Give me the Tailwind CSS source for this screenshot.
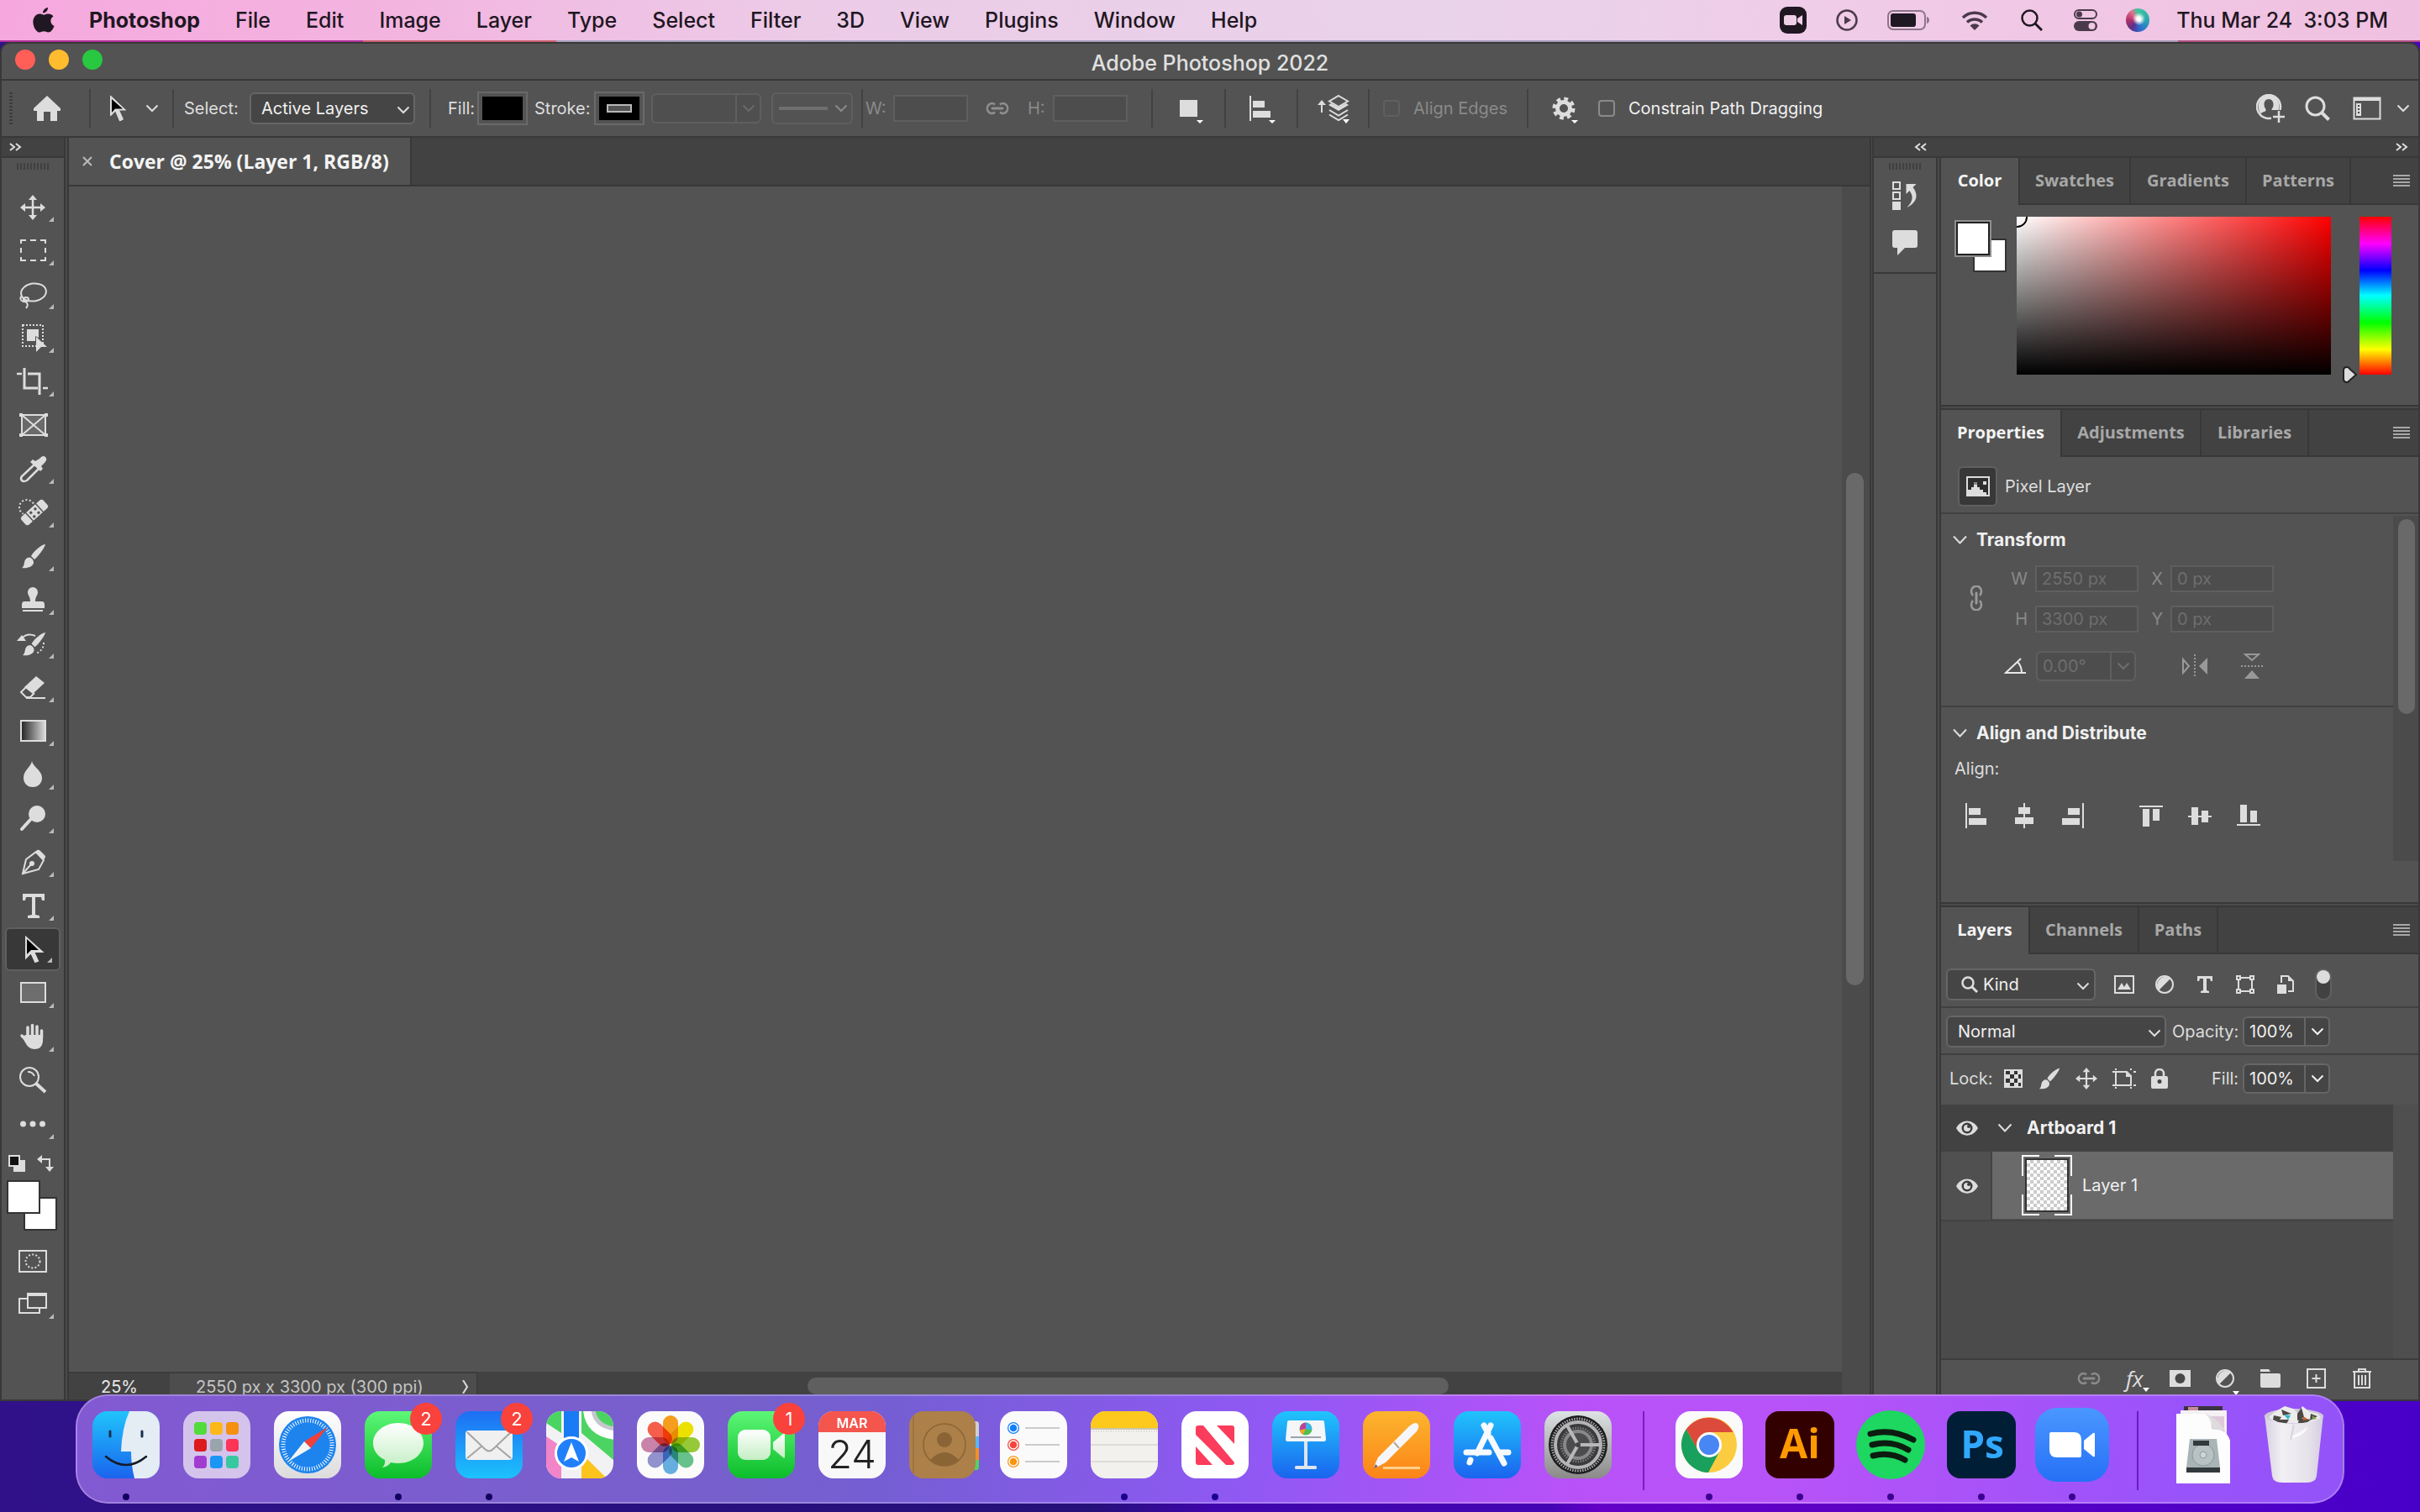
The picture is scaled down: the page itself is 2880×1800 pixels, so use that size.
<!DOCTYPE html>
<html lang="en">
<head>
    <meta charset="UTF-8">
    <meta name="viewport" content="width=device-width, initial-scale=1.0">
    <title>Adobe Photoshop 2022</title>
    <script src="https://cdn.jsdelivr.net/npm/@tailwindcss/browser@4"></script>
</head>
<body class="h-screen flex flex-col overflow-hidden font-['Inter',sans-serif] text-[20px] leading-6 text-[#dddddd] bg-[linear-gradient(to_right,#30118a,#241078_45%,#3f06ab_50%,#4405b4_64%,#6400c8_66%,#5a02c4_80%,#4800c8)]">

    <!-- shared icons -->
    <svg class="hidden">
        <symbol id="chev" viewBox="0 0 16 10"><path d="M1.500 1.500 8 8l6.500-6.500" fill="none" stroke="currentColor" stroke-width="2"/></symbol>
        <symbol id="tri" viewBox="0 0 8 5"><path d="M0 0h8L4 5z" fill="currentColor"/></symbol>
        <symbol id="menu" viewBox="0 0 20 16"><path d="M0 2h20M0 6h20M0 10h20M0 14h20" stroke="currentColor" stroke-width="2"/></symbol>
        <symbol id="link" viewBox="0 0 28 16"><path d="M11 3.500A5.500 6 0 1 0 11 12.500M17 3.500a5.500 6 0 1 1 0 9" fill="none" stroke="currentColor" stroke-width="2.500"/><path d="M8 8h12" stroke="currentColor" stroke-width="3" stroke-linecap="round"/></symbol>
        <symbol id="eye" viewBox="0 0 26 18"><path d="M0 9C6-2.500 20-2.500 26 9 20 20.500 6 20.500 0 9z" fill="#ddd"/><circle cx="13" cy="9" r="6.500" fill="#3c3c3c"/><circle cx="13" cy="9" r="4" fill="#ddd"/><circle cx="15" cy="7" r="2" fill="#3c3c3c"/></symbol>
        <symbol id="brush" viewBox="0 0 30 30"><path d="M29 1C25 1 15 9 12 15l4 4C21 15 28 5 29 1zM10.500 16.500c-4 0-6 3-6.500 6S3 28 1 29c6 1 13-1 14-6 .3-2-1-4-2-5z" fill="currentColor"/></symbol>
        <symbol id="move" viewBox="0 0 30 30"><path d="M15 4v22M4 15h22" stroke="currentColor" stroke-width="2.500"/><path d="M15 0l5 6H10zM15 30l5-6H10zM0 15l6-5v10zM30 15l-6-5v10z" fill="currentColor"/></symbol>
        <symbol id="half" viewBox="0 0 24 24"><circle cx="12" cy="12" r="10" fill="none" stroke="currentColor" stroke-width="2"/><path d="M19 5A10 10 0 0 0 5 19z" fill="currentColor"/></symbol>
    </svg>

    <!-- macOS menu bar -->
    <header class="h-12 shrink-0 flex items-center pl-9 pr-[38px] text-[25px] font-medium text-[#1f1722] bg-[linear-gradient(to_right,#f6a8de,#f3b4e0_16%,#eccbe7_33%,#e9d3ea_60%,#f0cce8_76%,#f0c0e0)]">
        <svg class="w-8 h-8 mr-[38px] shrink-0" viewBox="0 0 32 32"><path d="M21 1c.2 3-2.500 6.500-6 6.500C14.800 4.300 18 1.300 21 1zM27.500 11.500c-5 3-3.500 9.500 1 11.500-1.500 4-4 7.500-7 7.500-2 0-3-1.200-5.300-1.200S12.800 30.500 11 30.500C6.500 30.500 1 20 4.500 13c2-4 6-5.200 8.500-4.200 1.200.4 2.300.9 3.200.9 1 0 2.300-.8 4-1.200 3-.5 6 .8 7.300 3z" fill="#1f1722"/></svg>
        <nav class="flex items-center gap-[42px] whitespace-nowrap">
            <a href="#" class="font-bold">Photoshop</a>
            <a href="#">File</a>
            <a href="#">Edit</a>
            <a href="#">Image</a>
            <a href="#">Layer</a>
            <a href="#">Type</a>
            <a href="#">Select</a>
            <a href="#">Filter</a>
            <a href="#">3D</a>
            <a href="#">View</a>
            <a href="#">Plugins</a>
            <a href="#">Window</a>
            <a href="#">Help</a>
        </nav>
        <div class="ml-auto flex items-center whitespace-nowrap">
            <svg class="w-8 h-8 mr-[35px]" viewBox="0 0 32 32"><rect width="32" height="32" rx="9" fill="#1f1722"/><rect x="5" y="10" width="15" height="12" rx="3" fill="#f0cfe8"/><path d="M21 14l6-4v12l-6-4z" fill="#f0cfe8"/></svg>
            <svg class="w-[26px] h-[26px] mr-[35px]" viewBox="0 0 26 26"><circle cx="13" cy="13" r="11.500" fill="none" stroke="#4b3a4b" stroke-width="2.500"/><path d="M10 8l8 5-8 5z" fill="#4b3a4b"/></svg>
            <svg class="w-[52px] h-6 mr-9" viewBox="0 0 52 24"><rect x="1" y="1" width="44" height="22" rx="6" fill="none" stroke="#8d7489" stroke-width="2"/><rect x="4" y="4" width="30" height="16" rx="3" fill="#1f1722"/><path d="M47 8c4 1 4 7 0 8z" fill="#8d7489"/></svg>
            <svg class="w-8 h-6 mr-[39px]" viewBox="0 0 32 24"><path d="M2 9a20 20 0 0 1 28 0M7 14.500a13 13 0 0 1 18 0" fill="none" stroke="#4b3a4b" stroke-width="3.500"/><path d="M10.500 18.500a8 8 0 0 1 11 0L16 24z" fill="#4b3a4b"/></svg>
            <svg class="w-[26px] h-[26px] mr-[37px]" viewBox="0 0 26 26"><circle cx="10.500" cy="10.500" r="9" fill="none" stroke="#1f1722" stroke-width="2.500"/><path d="M17 17l8 8" stroke="#1f1722" stroke-width="3"/></svg>
            <svg class="w-7 h-[26px] mr-[34px]" viewBox="0 0 28 26"><rect x="1" y="1" width="26" height="10" rx="5" fill="none" stroke="#4b3a4b" stroke-width="2"/><circle cx="6.500" cy="6" r="3.500" fill="#4b3a4b"/><rect y="14" width="28" height="12" rx="6" fill="#4b3a4b"/><circle cx="21.500" cy="20" r="4" fill="#f0c8e4"/></svg>
            <span class="w-7 h-7 mr-8 rounded-full bg-[radial-gradient(circle_at_55%_45%,#ffffff,#ffffff_10%,transparent_35%),conic-gradient(#3ec8a0,#2aa6b0_25%,#2a6ed0_45%,#5b2f8c_60%,#b0306a_75%,#e0708c_90%,#3ec8a0)]"></span>
            <time class="whitespace-pre">Thu Mar 24  3:03 PM</time>
        </div>
    </header>
    <div class="h-[2px] shrink-0 bg-[linear-gradient(to_right,#b0309a_15%,#c86070_15%,#c86070_23%,#a8a0c0_23%,#a898b8_90%,#b05080_90%)]"></div>

    <main class="flex-1 min-h-0 mb-[132px] flex flex-col rounded-t-xl border-2 border-[#383838] bg-[#535353] overflow-hidden">

        <!-- title bar -->
        <div class="h-[44px] shrink-0 grid grid-cols-[1fr_auto_1fr] items-center border-b-2 border-[#383838] text-[25px] text-[#e0e0e0]">
            <div class="flex gap-4 pl-4 pb-1">
                <button aria-label="Close" class="w-6 h-6 rounded-full bg-[#ff5f57]"></button>
                <button aria-label="Minimize" class="w-6 h-6 rounded-full bg-[#febc2e]"></button>
                <button aria-label="Zoom" class="w-6 h-6 rounded-full bg-[#28c840]"></button>
            </div>
            <h1 class="pt-[3px] font-medium">Adobe Photoshop 2022</h1>
        </div>

        <!-- options bar -->
        <div class="h-[68px] shrink-0 flex items-center border-b-2 border-[#383838] whitespace-nowrap">
            <span class="ml-[9px] w-1 h-[38px] bg-[repeating-linear-gradient(#3c3c3c_0_2px,transparent_2px_4px)]"></span>
            <button aria-label="Home" class="ml-[25px]"><svg class="w-8 h-[30px]" viewBox="0 0 32 30"><path d="M16 0L0 15v3h4v12h8V19h8v11h8V18h4v-3z" fill="#ddd"/></svg></button>
            <span class="ml-[34px] w-[2px] h-[46px] bg-[#424242]"></span>
            <button aria-label="Path Selection Tool" class="ml-[22px]"><svg class="w-[22px] h-[34px]" viewBox="0 0 22 34"><path d="M1.500 2v24l6-6 5 12 4-2-5-11h8z" fill="#ddd" stroke="#ddd"/><path d="M3 6v16l4-4.500h9z" fill="#000"/></svg></button>
            <button aria-label="Tool presets" class="ml-[21px]"><svg class="w-4 h-[10px]"><use href="#chev"/></svg></button>
            <span class="ml-4 w-[2px] h-[46px] bg-[#424242]"></span>
            <label for="select-layers" class="ml-3 w-[66px]">Select:</label>
            <div class="relative ml-3 w-[197px]">
                <select id="select-layers" class="appearance-none w-full h-[38px] pl-[12px] rounded-md border-2 border-[#666666] bg-[#454545] text-[#f0f0f0]"><option>Active Layers</option></select>
                <svg class="absolute right-[6px] top-4 w-4 h-[10px]"><use href="#chev"/></svg>
            </div>
            <span class="ml-[17px] w-[2px] h-[46px] bg-[#424242]"></span>
            <span class="ml-5 w-8">Fill:</span>
            <button aria-label="Fill" class="ml-[3px] w-[60px] h-10 border-2 border-[#6a6a6a] p-[4px]"><span class="block h-full bg-black"></span></button>
            <span class="ml-2 w-[68px]">Stroke:</span>
            <button aria-label="Stroke" class="ml-[3px] w-[60px] h-10 border-2 border-[#6a6a6a] p-[4px]"><span class="flex h-full bg-black items-center justify-center"><span class="w-[30px] h-[10px] border-2 border-[#b8b8b8] bg-[#535353]"></span></span></button>
            <div class="ml-2 w-[131px] h-9 flex rounded-md border-2 border-[#5f5f5f] bg-[#4f4f4f] text-[#6a6a6a]">
                <input aria-label="Stroke width" disabled class="w-[100px] h-full border-r-2 border-[#5f5f5f]">
                <button aria-label="Stroke width options" class="flex-1 grid place-items-center"><svg class="w-4 h-[10px]"><use href="#chev"/></svg></button>
            </div>
            <button aria-label="Stroke style" class="ml-3 w-[97px] h-[38px] flex items-center justify-between pl-[7px] pr-1 rounded-md border-2 border-[#5f5f5f] text-[#8a8a8a]"><span class="w-[58px] h-1 bg-[#6f6f6f]"></span><svg class="w-4 h-[10px]"><use href="#chev"/></svg></button>
            <span class="ml-[10px] w-[2px] h-[46px] bg-[#424242]"></span>
            <label for="path-w" class="ml-[3px] w-[24px] text-[#8a8a8a]">W:</label>
            <input id="path-w" disabled class="ml-[9px] w-[89px] h-8 border-2 border-[#5f5f5f] bg-[#4d4d4d]">
            <svg class="ml-[21px] w-7 h-4 text-[#8f8f8f]"><use href="#link"/></svg>
            <label for="path-h" class="ml-[22px] w-5 text-[#8a8a8a]">H:</label>
            <input id="path-h" disabled class="ml-[10px] w-[89px] h-8 border-2 border-[#5f5f5f] bg-[#4d4d4d]">
            <span class="ml-[28px] w-[2px] h-[46px] bg-[#424242]"></span>
            <button aria-label="Path operations" class="ml-8 w-8"><svg class="w-8 h-9" viewBox="0 0 32 36"><path d="M0 8h21v20H0z" fill="#ddd"/><path d="M20 32h8l-4 4z" fill="#fff"/></svg></button>
            <span class="ml-[21px] w-[2px] h-[46px] bg-[#424242]"></span>
            <button aria-label="Path alignment" class="ml-[28px] w-8"><svg class="w-8 h-9" viewBox="0 0 32 36"><path d="M0 3h2v30H0zM4 9h14v8H4zM4 21h21v8H4z" fill="#ddd"/><path d="M23 32h8l-4 4z" fill="#fff"/></svg></button>
            <span class="ml-[24px] w-[2px] h-[46px] bg-[#424242]"></span>
            <button aria-label="Path arrangement" class="ml-[23px] w-10"><svg class="w-10 h-9" viewBox="0 0 40 36"><path d="M5 13v10" stroke="#ddd" stroke-width="2"/><path d="M0 14l5-6 5 6z" fill="#ddd"/><path d="M25 3l11 6.500-11 6.500-11-6.500zM14 20l11 6.500L36 20M14 25.500L25 32l11-6.500" fill="none" stroke="#ddd" stroke-width="2"/><path d="M13 14l12 7 12-7-3-2-9 5-9-5z" fill="#ddd"/><path d="M30 31h8l-4 5z" fill="#fff"/></svg></button>
            <span class="ml-[20px] w-[2px] h-[46px] bg-[#424242]"></span>
            <label class="ml-4 flex items-center gap-4 w-[152px] text-[#8a8a8a]"><input type="checkbox" disabled class="appearance-none w-5 h-5 rounded border-2 border-[#606060]">Align Edges</label>
            <span class="ml-[19px] w-[2px] h-[46px] bg-[#424242]"></span>
            <button aria-label="Path options" class="ml-[28px] w-8"><svg class="w-8 h-9" viewBox="0 0 32 36"><circle cx="14" cy="18" r="11" fill="none" stroke="#ddd" stroke-width="5" stroke-dasharray="4.600 4.040"/><circle cx="14" cy="18" r="7.500" fill="none" stroke="#ddd" stroke-width="5"/><path d="M23 32h8l-4 4z" fill="#fff"/></svg></button>
            <label class="ml-[23px] flex items-center gap-4 text-[#f0f0f0]"><input type="checkbox" class="appearance-none w-5 h-5 rounded border-2 border-[#8a8a8a]">Constrain Path Dragging</label>
            <div class="ml-auto mr-[10px] flex items-center">
                <button aria-label="Account"><svg class="w-[34px] h-[34px]" viewBox="0 0 34 34"><circle cx="15" cy="15" r="14" fill="none" stroke="#ddd" stroke-width="2.500"/><path d="M15 6c4 0 5.500 3 5.500 6.500 0 2.500-1 4-2 5.500v2c2 1.500 5 1.500 6 3.500 6-8 3-21-9.500-22.500C3 2 0 15 5.500 23.500c1-2 4-2 6-3.500v-2c-1-1.500-2-3-2-5.500C9.500 9 11 6 15 6z" fill="#ddd"/><path d="M18 19h16v15H18z" fill="#535353"/><path d="M27 20v14M20 27h14" stroke="#ddd" stroke-width="2.500"/></svg></button>
                <button aria-label="Search" class="ml-6"><svg class="w-[30px] h-[30px]" viewBox="0 0 30 30"><circle cx="12.500" cy="12.500" r="10.500" fill="none" stroke="#ddd" stroke-width="3"/><path d="M20 20l8.500 8.500" stroke="#ddd" stroke-width="4"/></svg></button>
                <button aria-label="Workspace" class="ml-[27px]"><svg class="w-[34px] h-7" viewBox="0 0 34 28"><path d="M1.500 1.500h31v25h-31z" fill="none" stroke="#ddd" stroke-width="2"/><path d="M1 1h32v4H1zM4 8h6v15H4z" fill="#ddd"/><path d="M6 10h2v2H6zM6 14h2v2H6zM6 18h2v2H6z" fill="#444"/></svg></button>
                <button aria-label="Workspace options" class="ml-[18px]"><svg class="w-4 h-[10px]"><use href="#chev"/></svg></button>
            </div>
        </div>

        <div class="flex-1 min-h-0 flex">

            <!-- toolbar -->
            <aside class="w-[74px] shrink-0 flex flex-col">
                <button aria-label="Expand toolbar" class="h-[24px] shrink-0 pl-[9px] bg-[#424242] border-b-2 border-[#383838]"><svg class="w-4 h-3" viewBox="0 0 16 12"><path d="M1 2l5 4-5 4M8 2l5 4-5 4" fill="none" stroke="#ddd" stroke-width="2"/></svg></button>
                <span class="mt-[6px] mx-auto w-[38px] h-2 shrink-0 bg-[repeating-linear-gradient(to_right,#404040_0_2px,transparent_2px_4px)]"></span>
                <div id="tools" class="mt-[18px] flex flex-col items-center"></div>
                <div class="mt-[11px] flex justify-between pl-2 pr-[12px]">
                    <button aria-label="Default colors"><svg class="w-5 h-5" viewBox="0 0 20 20"><path d="M6 6h14v14H6z" fill="#ddd"/><path d="M1 1h12v12H1z" fill="#111" stroke="#ddd" stroke-width="2"/></svg></button>
                    <button aria-label="Swap colors"><svg class="w-5 h-5" viewBox="0 0 20 20"><path d="M4 5h11v11" fill="none" stroke="#ddd" stroke-width="2"/><path d="M0 5l6-5v10zM15 20l-5-6h10z" fill="#ddd"/></svg></button>
                </div>
                <div class="relative mt-[10px] ml-[6px] w-[60px] h-[60px]">
                    <button aria-label="Background color" class="absolute right-0 bottom-0 w-10 h-10 border-2 border-[#333333] bg-white"></button>
                    <button aria-label="Foreground color" class="absolute left-0 top-0 w-10 h-10 border-2 border-[#333333] bg-white"></button>
                </div>
                <button aria-label="Quick mask" class="mt-[23px] mx-auto"><svg class="w-[34px] h-7" viewBox="0 0 34 28"><path d="M1 1h32v25H1z" fill="none" stroke="#ddd" stroke-width="2"/><ellipse cx="17" cy="13.500" rx="8.500" ry="8" fill="none" stroke="#ddd" stroke-width="2" stroke-dasharray="2 2.200"/></svg></button>
                <button aria-label="Screen mode" class="mt-[22px] w-16 pl-5"><svg class="w-[44px] h-8" viewBox="0 0 44 32"><path d="M1 8h24v17H1z" fill="#535353" stroke="#ddd" stroke-width="2"/><path d="M11 2h22v17H11z" fill="#535353" stroke="#ddd" stroke-width="2"/><path d="M10 1h24v4H10z" fill="#ddd"/><path d="M42 26v6h-6z" fill="#bbb"/></svg></button>
            </aside>
            <span class="w-[6px] shrink-0 border-x-2 border-[#383838] bg-[#4a4a4a]"></span>

            <!-- document -->
            <section class="flex-1 min-w-0 flex flex-col">
                <div class="h-[58px] shrink-0 flex bg-[#424242] border-b-2 border-[#383838]">
                    <div class="flex items-center gap-5 px-4 w-[408px] bg-[#535353] border-r-2 border-[#383838] font-['Open_Sans',sans-serif] font-bold text-[23px] text-[#f4f4f4] whitespace-nowrap">
                        <button aria-label="Close document"><svg class="w-3 h-3" viewBox="0 0 12 12"><path d="M1 1l10 10M11 1L1 11" stroke="#bbb" stroke-width="2"/></svg></button>
                        <span>Cover @ 25% (Layer 1, RGB/8)</span>
                    </div>
                </div>
                <div class="flex-1 min-h-0 flex">
                    <div class="flex-1"></div>
                    <div class="w-[33px] bg-[#4b4b4b] pl-[5px] pt-[341px]"><div class="w-[21px] h-[610px] rounded-full bg-[#696969]"></div></div>
                </div>
                <div class="h-[33px] shrink-0 flex bg-[#424242]">
                    <div class="w-[120px] flex items-center justify-center border-t-2 border-[#3c3c3c] text-[#e8e8e8]">25%</div>
                    <div class="w-[367px] flex items-center justify-between pl-[31px] pr-[8px] bg-[#4d4d4d] border-r-2 border-t-2 border-[#3c3c3c] text-[#c4c4c4] whitespace-nowrap">2550 px x 3300 px (300 ppi)<svg class="w-[10px] h-4" viewBox="0 0 10 16"><path d="M2 0l5 8-5 8" fill="none" stroke="#ddd" stroke-width="2"/></svg></div>
                    <div class="flex-1 px-[392px] pt-[7px]"><div class="w-[763px] h-5 rounded-full bg-[#5f5f5f]"></div></div>
                    <div class="w-[33px] bg-[#4b4b4b]"></div>
                </div>
            </section>
            <span class="w-[5px] shrink-0 border-x-2 border-[#383838] bg-[#4a4a4a]"></span>

            <!-- right dock -->
            <div class="w-[648px] shrink-0 flex flex-col">
                <div class="h-[24px] shrink-0 flex items-center justify-between pl-[48px] pr-[12px] bg-[#424242] border-b-2 border-[#383838]">
                    <button aria-label="Expand panels"><svg class="w-4 h-3" viewBox="0 0 16 12"><path d="M7 2L2 6l5 4M14 2L9 6l5 4" fill="none" stroke="#ddd" stroke-width="2"/></svg></button>
                    <button aria-label="Collapse panels"><svg class="w-4 h-3" viewBox="0 0 16 12"><path d="M2 2l5 4-5 4M9 2l5 4-5 4" fill="none" stroke="#ddd" stroke-width="2"/></svg></button>
                </div>
                <div class="flex-1 min-h-0 flex">
                    <div class="w-[74px] shrink-0">
                        <div class="h-[138px] flex flex-col items-center border-b-2 border-[#383838]">
                            <span class="mt-[6px] w-[38px] h-2 bg-[repeating-linear-gradient(to_right,#404040_0_2px,transparent_2px_4px)]"></span>
                            <button aria-label="History" class="mt-[14px]"><svg class="w-[30px] h-[34px]" viewBox="0 0 30 34"><path d="M1 1h8v8H1zM1 13h8v8H1z" fill="none" stroke="#ddd" stroke-width="2"/><path d="M0 24h10v10H0zM16.500 3h12l-4 4c7 9 5 18-7 24 7-7 8-13 3-20l-4 4z" fill="#ddd"/></svg></button>
                            <button aria-label="Comments" class="mt-6"><svg class="w-[30px] h-[30px]" viewBox="0 0 30 30"><path d="M3 0h24q3 0 3 3v15q0 3-3 3H15l-9 9v-9H3q-3 0-3-3V3q0-3 3-3z" fill="#ddd"/></svg></button>
                        </div>
                    </div>
                    <span class="w-[6px] shrink-0 border-x-2 border-[#383838] bg-[#4a4a4a]"></span>

                    <div class="flex-1 min-w-0 flex flex-col">
                        <!-- color -->
                        <section class="h-[296px] shrink-0 border-b-2 border-[#383838]">
                            <div class="h-[56px] flex font-['Open_Sans',sans-serif] font-bold text-[#a8a8a8] bg-[#424242]">
                                <button class="w-[94px] pb-[2px] border-r-2 border-[#383838] bg-[#535353] text-[#f4f4f4]">Color</button>
                                <button class="w-[132px] border-r-2 border-b-2 border-[#383838]">Swatches</button>
                                <button class="w-[138px] border-r-2 border-b-2 border-[#383838]">Gradients</button>
                                <button class="w-[124px] border-r-2 border-b-2 border-[#383838]">Patterns</button>
                                <div class="flex-1 flex items-center justify-end pr-[10px] border-b-2 border-[#383838]"><button aria-label="Panel menu"><svg class="w-5 h-4"><use href="#menu"/></svg></button></div>
                            </div>
                            <div class="flex pt-[14px] pl-4">
                                <div class="relative mt-1 w-[62px] h-[62px]">
                                    <button aria-label="Set background color" class="absolute right-0 bottom-0 w-10 h-10 border-2 border-[#333333] bg-white"></button>
                                    <button aria-label="Set foreground color" class="absolute left-0 top-0 w-11 h-11 border-2 border-[#8f8f8f] bg-white"><span class="block w-full h-full border-2 border-[#222222]"></span></button>
                                </div>
                                <div class="relative overflow-hidden ml-3 w-[374px] h-[188px] bg-[linear-gradient(to_top,#000000,transparent),linear-gradient(to_right,#ffffff,#ff0000)]">
                                    <span class="absolute -left-3 -top-3 w-[25px] h-[25px] rounded-full border-2 border-black"></span>
                                </div>
                                <svg class="mt-[178px] ml-[14px] w-[17px] h-5" viewBox="0 0 17 20"><path d="M1 5q0-4 4-4 2 0 3 2l8 7-8 7q-1 2-3 2-4 0-4-4z" fill="#ddd" stroke="#222" stroke-width="2"/></svg>
                                <div class="ml-[3px] w-[38px] h-[188px] bg-[linear-gradient(#ff0000,#ff00ff_17%,#0000ff_34%,#00ffff_50%,#00ff00_67%,#ffff00_84%,#ff0000)]"></div>
                            </div>
                        </section>
                        <div class="h-1 shrink-0 bg-[#4a4a4a] border-b-2 border-[#383838]"></div>

                        <!-- properties -->
                        <section class="h-[588px] shrink-0 flex flex-col border-b-2 border-[#383838]">
                            <div class="h-[56px] shrink-0 flex font-['Open_Sans',sans-serif] font-bold text-[#a8a8a8] bg-[#424242]">
                                <button class="w-[144px] pb-[2px] border-r-2 border-[#383838] bg-[#535353] text-[#f4f4f4]">Properties</button>
                                <button class="w-[166px] border-r-2 border-b-2 border-[#383838]">Adjustments</button>
                                <button class="w-[128px] border-r-2 border-b-2 border-[#383838]">Libraries</button>
                                <div class="flex-1 flex items-center justify-end pr-[10px] border-b-2 border-[#383838]"><button aria-label="Panel menu"><svg class="w-5 h-4"><use href="#menu"/></svg></button></div>
                            </div>
                            <div class="h-[68px] shrink-0 flex items-center gap-[9px] pl-5 pt-1 border-b-2 border-[#404040]">
                                <span class="w-[47px] h-12 grid place-items-center rounded-md border-2 border-[#606060] bg-[#383838]"><svg class="w-7 h-6" viewBox="0 0 28 24"><path d="M1 1h26v22H1z" fill="#2e2e2e" stroke="#ddd" stroke-width="2"/><path d="M2 22v-6h4v-3h3v-4h4v4h3v3h4v3h4v3z" fill="#ddd"/><path d="M20 6h4v4h-4z" fill="#ddd"/><path d="M9 7h4v3H9z" fill="#888"/></svg></span>
                                Pixel Layer
                            </div>
                            <div class="flex-1 min-h-0 flex">
                                <div class="flex-1">
                                    <div class="h-[230px] pt-[19px] pl-[14px] border-b-2 border-[#404040]">
                                        <h2 class="flex items-center gap-[11px] font-bold text-[21px] leading-6 text-[#f0f0f0]"><svg class="w-[17px] h-3" viewBox="0 0 17 12"><path d="M1 1.500l7.500 8 7.500-8" fill="none" stroke="#ddd" stroke-width="2"/></svg>Transform</h2>
                                        <div class="flex mt-[18px]">
                                            <button aria-label="Link width and height" class="ml-5 w-4 h-[30px] mt-6 text-[#9a9a9a]"><svg class="w-4 h-[30px]" viewBox="0 0 16 30"><path d="M4 12A6 6.500 0 1 1 12 12M4 18a6 6.500 0 1 0 8 0" fill="none" stroke="currentColor" stroke-width="2.500"/><path d="M8 9v12" stroke="currentColor" stroke-width="3" stroke-linecap="round"/></svg></button>
                                            <div class="ml-[33px] grid grid-cols-[20px_123px_20px_123px] gap-x-[9px] gap-y-4 items-center text-[#8a8a8a]">
                                                <label for="w" class="text-right">W</label>
                                                <input id="w" disabled value="2550 px" class="w-[123px] h-8 pl-[6px] border-2 border-[#5f5f5f] bg-[#4d4d4d] text-[#6e6e6e]">
                                                <label for="x" class="text-right">X</label>
                                                <input id="x" disabled value="0 px" class="w-[123px] h-8 pl-[6px] border-2 border-[#5f5f5f] bg-[#4d4d4d] text-[#6e6e6e]">
                                                <label for="h" class="text-right">H</label>
                                                <input id="h" disabled value="3300 px" class="w-[123px] h-8 pl-[6px] border-2 border-[#5f5f5f] bg-[#4d4d4d] text-[#6e6e6e]">
                                                <label for="y" class="text-right">Y</label>
                                                <input id="y" disabled value="0 px" class="w-[123px] h-8 pl-[6px] border-2 border-[#5f5f5f] bg-[#4d4d4d] text-[#6e6e6e]">
                                            </div>
                                        </div>
                                        <div class="flex items-center mt-[22px] pl-[61px] text-[#999999]">
                                            <label for="angle"><svg class="w-[26px] h-5" viewBox="0 0 26 20"><path d="M20 1L2 18h24M16 5q5 5 5 13" fill="none" stroke="#e8e8e8" stroke-width="2"/></svg></label>
                                            <div class="ml-3 w-[119px] h-9 flex rounded-md border-2 border-[#5f5f5f] bg-[#4d4d4d] text-[#6e6e6e]">
                                                <input id="angle" disabled value="0.00°" class="w-[88px] pl-[6px] border-r-2 border-[#5f5f5f]">
                                                <button aria-label="Angle options" class="flex-1 grid place-items-center"><svg class="w-4 h-[10px]"><use href="#chev"/></svg></button>
                                            </div>
                                            <button aria-label="Flip horizontal" class="ml-[55px]"><svg class="w-[30px] h-7" viewBox="0 0 30 28"><path d="M1 6v16l7-8z" fill="none" stroke="currentColor" stroke-width="2"/><path d="M30 4v20L20 14z" fill="currentColor"/><path d="M15 0v28" stroke="currentColor" stroke-width="2" stroke-dasharray="2 2"/></svg></button>
                                            <button aria-label="Flip vertical" class="ml-[40px]"><svg class="w-[26px] h-[30px]" viewBox="0 0 26 30"><path d="M5 1h16l-8 7z" fill="none" stroke="currentColor" stroke-width="2"/><path d="M4 30h18l-9-10z" fill="currentColor"/><path d="M0 15h26" stroke="currentColor" stroke-width="2" stroke-dasharray="2 2"/></svg></button>
                                        </div>
                                    </div>
                                    <div class="pt-[19px] pl-[14px]">
                                        <h2 class="flex items-center gap-[11px] font-bold text-[21px] leading-6 text-[#f0f0f0]"><svg class="w-[17px] h-3" viewBox="0 0 17 12"><path d="M1 1.500l7.500 8 7.500-8" fill="none" stroke="#ddd" stroke-width="2"/></svg>Align and Distribute</h2>
                                        <p class="mt-[18px] pl-[2px]">Align:</p>
                                        <div class="flex mt-[29px] pl-[13px] gap-[30px]">
                                            <button aria-label="Align left edges"><svg class="w-7 h-[30px]" viewBox="0 0 28 30"><path d="M2 0h2v30H2zM6 6h14v8H6zM6 18h21v8H6z" fill="#ddd"/></svg></button>
                                            <button aria-label="Align horizontal centers"><svg class="w-7 h-[30px]" viewBox="0 0 28 30"><path d="M13 0h2v30h-2zM7 5h14v8H7zM3 17h22v8H3z" fill="#ddd"/></svg></button>
                                            <button aria-label="Align right edges"><svg class="w-7 h-[30px]" viewBox="0 0 28 30"><path d="M25 0h2v30h-2zM8 6h14v8H8zM1 18h21v8H1z" fill="#ddd"/></svg></button>
                                            <button aria-label="Align top edges" class="ml-[35px]"><svg class="w-7 h-[30px]" viewBox="0 0 28 30"><path d="M0 3h28v2H0zM4 7h8v21H4zM16 7h8v14h-8z" fill="#ddd"/></svg></button>
                                            <button aria-label="Align vertical centers"><svg class="w-7 h-[30px]" viewBox="0 0 28 30"><path d="M0 15h28v2H0zM4 5h8v21H4zM16 9h8v14h-8z" fill="#ddd"/></svg></button>
                                            <button aria-label="Align bottom edges"><svg class="w-7 h-[30px]" viewBox="0 0 28 30"><path d="M0 25h28v2H0zM4 2h8v21H4zM16 9h8v14h-8z" fill="#ddd"/></svg></button>
                                        </div>
                                    </div>
                                </div>
                                <div class="mt-[2px] w-[30px] h-[411px] pt-1 pl-[6px] bg-[#4b4b4b]"><div class="w-5 h-[232px] rounded-full bg-[#696969]"></div></div>
                            </div>
                        </section>
                        <div class="h-1 shrink-0 bg-[#4a4a4a] border-b-2 border-[#383838]"></div>

                        <!-- layers -->
                        <section class="flex-1 min-h-0 flex flex-col">
                            <div class="h-[56px] shrink-0 flex font-['Open_Sans',sans-serif] font-bold text-[#a8a8a8] bg-[#424242]">
                                <button class="w-[106px] pb-[2px] border-r-2 border-[#383838] bg-[#535353] text-[#f4f4f4]">Layers</button>
                                <button class="w-[130px] border-r-2 border-b-2 border-[#383838]">Channels</button>
                                <button class="w-[94px] border-r-2 border-b-2 border-[#383838]">Paths</button>
                                <div class="flex-1 flex items-center justify-end pr-[10px] border-b-2 border-[#383838]"><button aria-label="Panel menu"><svg class="w-5 h-4"><use href="#menu"/></svg></button></div>
                            </div>
                            <div class="h-16 shrink-0 flex items-center pt-[10px] pl-[6px] border-b-2 border-[#404040]">
                                <div class="relative w-[178px]">
                                    <svg class="absolute left-[18px] top-[9px] w-5 h-5" viewBox="0 0 20 20"><circle cx="8" cy="8" r="6.500" fill="none" stroke="#ddd" stroke-width="2.500"/><path d="M13 13l6 6" stroke="#ddd" stroke-width="3"/></svg>
                                    <select aria-label="Filter kind" class="appearance-none w-full h-[38px] pl-[42px] rounded-md border-2 border-[#666666] bg-[#454545] text-[#f0f0f0]"><option>Kind</option></select>
                                    <svg class="absolute right-[7px] top-4 w-4 h-[10px]"><use href="#chev"/></svg>
                                </div>
                                <div class="flex items-center gap-[24px] ml-[22px]">
                                    <button aria-label="Filter pixel layers"><svg class="w-6 h-6" viewBox="0 0 24 24"><path d="M1 2h22v20H1z" fill="none" stroke="#ddd" stroke-width="2"/><path d="M4 18l5-8 3 5 3-5 5 8z" fill="#ddd"/></svg></button>
                                    <button aria-label="Filter adjustment layers"><svg class="w-6 h-6"><use href="#half"/></svg></button>
                                    <button aria-label="Filter type layers"><svg class="w-6 h-6" viewBox="0 0 24 24"><path d="M3 2h18v6h-2l-1-3h-4v14l3 1v2H7v-2l3-1V5H6L5 8H3z" fill="#ddd"/></svg></button>
                                    <button aria-label="Filter shape layers"><svg class="w-6 h-6" viewBox="0 0 24 24"><path d="M4 4h16v16H4z" fill="none" stroke="#ddd" stroke-width="2"/><path d="M2 2h4v4H2zM18 2h4v4h-4zM2 18h4v4H2zM18 18h4v4h-4z" fill="#535353" stroke="#ddd" stroke-width="2"/></svg></button>
                                    <button aria-label="Filter smart objects"><svg class="w-6 h-6" viewBox="0 0 24 24"><path d="M7 10V2h8l6 6v12h-6" fill="none" stroke="#ddd" stroke-width="2"/><path d="M15 2v6h6z" fill="#ddd"/><path d="M2 12h11v11H2z" fill="#ddd"/></svg></button>
                                </div>
                                <button aria-label="Layer filtering" class="ml-[23px] w-5 h-[38px] flex items-start rounded-full border-2 border-[#606060] bg-[#424242]"><span class="w-4 h-4 rounded-full bg-[#dddddd]"></span></button>
                            </div>
                            <div class="h-14 shrink-0 flex items-center pl-[6px] pt-[2px] border-b-2 border-[#404040]">
                                <div class="relative w-[262px]">
                                    <select aria-label="Blend mode" class="appearance-none w-full h-[38px] pl-[12px] rounded-md border-2 border-[#666666] bg-[#454545] text-[#f0f0f0]"><option>Normal</option></select>
                                    <svg class="absolute right-[6px] top-4 w-4 h-[10px]"><use href="#chev"/></svg>
                                </div>
                                <label for="opacity" class="ml-[7px] w-[81px]">Opacity:</label>
                                <div class="ml-[3px] w-[104px] h-9 flex rounded-md border-2 border-[#666666] bg-[#454545] text-[#f0f0f0]">
                                    <input id="opacity" value="100%" class="w-[73px] pl-[6px] border-r-2 border-[#666666]">
                                    <button aria-label="Opacity slider" class="flex-1 grid place-items-center"><svg class="w-4 h-[10px]"><use href="#chev"/></svg></button>
                                </div>
                            </div>
                            <div class="h-[59px] shrink-0 flex items-center pb-[3px] pl-[10px]">
                                <span class="w-[52px]">Lock:</span>
                                <div class="flex items-center gap-[18px] ml-3">
                                    <button aria-label="Lock transparent pixels"><svg class="w-6 h-6" viewBox="0 0 24 24"><path d="M2 2h20v20H2z" fill="#333" stroke="#ddd" stroke-width="2"/><path d="M8 2h5v5H8zM17 2h5v5h-5zM3 7h5v5H3zM13 7h5v5h-5zM8 12h5v5H8zM17 12h5v5h-5zM3 17h5v5H3zM13 17h5v5h-5z" fill="#ddd"/></svg></button>
                                    <button aria-label="Lock image pixels"><svg class="w-[26px] h-[26px]"><use href="#brush"/></svg></button>
                                    <button aria-label="Lock position"><svg class="w-[26px] h-[26px]"><use href="#move"/></svg></button>
                                    <button aria-label="Lock artboard nesting" class="w-7"><svg class="w-7 h-6" viewBox="0 0 28 24"><path d="M4 4h13l5 5v11H4z" fill="none" stroke="#ddd" stroke-width="2"/><path d="M16 4v6h6z" fill="#ddd"/><path d="M0 4h3M4 0v2M22 0v2M25 4h3M0 20h3M4 22v2M22 22v2M25 20h3" stroke="#ddd" stroke-width="2"/></svg></button>
                                    <button aria-label="Lock all"><svg class="w-5 h-6" viewBox="0 0 20 24"><path d="M5 10V6a5 5 0 0 1 10 0v4" fill="none" stroke="#ddd" stroke-width="2.500"/><rect y="9" width="20" height="15" rx="2" fill="#ddd"/><circle cx="10" cy="15.500" r="2.500" fill="#444"/></svg></button>
                                </div>
                                <label for="fill-opacity" class="ml-auto w-[34px]">Fill:</label>
                                <div class="ml-[3px] mr-[105px] w-[104px] h-9 flex rounded-md border-2 border-[#666666] bg-[#454545] text-[#f0f0f0]">
                                    <input id="fill-opacity" value="100%" class="w-[73px] pl-[6px] border-r-2 border-[#666666]">
                                    <button aria-label="Fill slider" class="flex-1 grid place-items-center"><svg class="w-4 h-[10px]"><use href="#chev"/></svg></button>
                                </div>
                            </div>
                            <div class="flex-1 min-h-0 flex bg-[#4b4b4b]">
                                <ul class="flex-1 text-[#f0f0f0]">
                                    <li class="h-14 flex items-center pl-[18px] bg-[#424242] font-bold text-[21px]">
                                        <button aria-label="Toggle artboard visibility"><svg class="w-[26px] h-[18px]"><use href="#eye"/></svg></button>
                                        <button aria-label="Collapse artboard" class="ml-[23px] mr-[17px]"><svg class="w-[18px] h-3" viewBox="0 0 17 12"><path d="M1 1.500l7.500 8 7.500-8" fill="none" stroke="#ddd" stroke-width="2"/></svg></button>
                                        Artboard 1
                                    </li>
                                    <li class="h-[83px] flex border-b-2 border-[#434343] bg-[#505050]">
                                        <button aria-label="Toggle layer visibility" class="w-[61px] pl-[18px] border-r-2 border-[#434343]"><svg class="w-[26px] h-[18px]"><use href="#eye"/></svg></button>
                                        <div class="flex-1 flex items-center h-20 pl-[35px] gap-3 bg-[#6a6a6a]">
                                            <span class="relative w-[60px] h-[72px] p-1">
                                                <svg class="absolute inset-0 w-[60px] h-[72px]" viewBox="0 0 60 72"><path d="M21 1H1v24M39 1h20v24M21 71H1V47M39 71h20V47" fill="none" stroke="#fff" stroke-width="2"/></svg>
                                                <span class="block w-full h-full border-2 border-[#333333] bg-[repeating-conic-gradient(#cccccc_0%_25%,#ffffff_0%_50%)] bg-size-[8px_8px]"></span>
                                            </span>
                                            Layer 1
                                        </div>
                                    </li>
                                </ul>
                                <div class="w-[30px] bg-[#4f4f4f]"></div>
                            </div>
                            <div class="h-[49px] shrink-0 flex items-center justify-end gap-[26px] pr-[54px] pb-1 border-t-2 border-[#3c3c3c]">
                                <button aria-label="Link layers"><svg class="w-7 h-4 text-[#8a8a8a]"><use href="#link"/></svg></button>
                                <button aria-label="Layer style" class="relative w-7 pl-1 text-left font-['Open_Sans',sans-serif] italic text-[26px]">fx<svg class="absolute -right-[4px] -bottom-1 w-2 h-[5px] text-white"><use href="#tri"/></svg></button>
                                <button aria-label="Add mask"><svg class="w-7 h-6" viewBox="0 0 28 24"><path d="M2 2h25v20H2z" fill="#ddd"/><circle cx="14.500" cy="12" r="6" fill="#484848"/></svg></button>
                                <button aria-label="New adjustment layer" class="relative w-7 grid place-items-center"><svg class="w-6 h-6"><use href="#half"/></svg><svg class="absolute -right-[3px] -bottom-2 w-2 h-[5px] text-white"><use href="#tri"/></svg></button>
                                <button aria-label="New group"><svg class="w-7 h-6" viewBox="0 0 28 24"><path d="M2 1h10l2 3H2zM2 6h22q2 0 2 2v13q0 2-2 2H4q-2 0-2-2z" fill="#ddd"/></svg></button>
                                <button aria-label="New layer"><svg class="w-7 h-6" viewBox="0 0 28 24"><path d="M4 1h21v22H4zM14.500 7v10M9.500 12h10" fill="none" stroke="#ddd" stroke-width="2"/></svg></button>
                                <button aria-label="Delete layer"><svg class="w-7 h-6" viewBox="0 0 28 24"><path d="M4 4h22M11 4V1h8v3M6 5v18h18V5M11 8v12M15 8v12M19 8v12" fill="none" stroke="#ddd" stroke-width="2"/></svg></button>
                            </div>
                        </section>
                    </div>
                </div>
            </div>
        </div>
    </main>

    <!-- dock -->
    <nav aria-label="Dock" class="fixed bottom-[10px] left-1/2 -translate-x-1/2 h-[130px] flex pt-[18px] px-1 rounded-[38px] border-2 border-white/25 bg-[linear-gradient(100deg,#8259d2,#7660cc_30%,#755ed4_36%,#9058f4_52%,#b852f8_66%,#b653f8_76%,#9a53fa_92%,#9353f8)]">
        <svg class="absolute w-0 h-0">
            <defs>
                <linearGradient id="g-green" x2="0" y2="1"><stop stop-color="#5df777"/><stop offset="1" stop-color="#0cbd2a"/></linearGradient>
                <linearGradient id="g-blue" x2="0" y2="1"><stop stop-color="#1e6ef4"/><stop offset="1" stop-color="#1cc2fc"/></linearGradient>
                <linearGradient id="g-blue2" x2="0" y2="1"><stop stop-color="#20c4fc"/><stop offset="1" stop-color="#1a64ee"/></linearGradient>
                <linearGradient id="g-white" x2="0" y2="1"><stop stop-color="#ffffff"/><stop offset="1" stop-color="#dcdcdc"/></linearGradient>
                <linearGradient id="g-bubble" x2="0" y2="1"><stop stop-color="#ffffff"/><stop offset="1" stop-color="#c4eec4"/></linearGradient>
                <linearGradient id="g-orange" x2="0" y2="1"><stop stop-color="#fcb52e"/><stop offset="1" stop-color="#fc8418"/></linearGradient>
                <linearGradient id="g-grey" x2="0" y2="1"><stop stop-color="#dde2e4"/><stop offset="1" stop-color="#8a8a88"/></linearGradient>
                <linearGradient id="g-zoom" x2="0" y2="1"><stop stop-color="#4a97ff"/><stop offset="1" stop-color="#2670f6"/></linearGradient>
                <linearGradient id="g-bin"><stop stop-color="#d8d0e0"/><stop offset=".3" stop-color="#f2f0f4"/><stop offset=".75" stop-color="#e6e2ea"/><stop offset="1" stop-color="#d4cce0"/></linearGradient>
                <clipPath id="tile"><rect width="80" height="80" rx="18"/></clipPath>
            </defs>
        </svg>

        <button aria-label="Finder" class="relative w-[108px] h-20 flex items-center justify-center"><svg class="w-20 h-20" viewBox="0 0 80 80"><g clip-path="url(#tile)"><path d="M0 0h80v80H0z" fill="url(#g-blue2)"/><path d="M44 0h36v80H50q-4-16-4-32H34Q35 20 44 0z" fill="#e4ecf4"/></g><path d="M21 24v6M59 24v6" stroke="#16304a" stroke-width="3" stroke-linecap="round"/><path d="M16 54q24 20 48 0" fill="none" stroke="#141c28" stroke-width="2.500" stroke-linecap="round"/></svg><span class="absolute left-1/2 -translate-x-1/2 -bottom-[26px] w-2 h-2 rounded-full bg-[#120060]"></span></button>
        <button aria-label="Launchpad" class="relative w-[108px] h-20 flex items-center justify-center"><svg class="w-20 h-20" viewBox="0 0 80 80"><rect width="80" height="80" rx="18" fill="#d4c4ec"/><g><rect x="13" y="13" width="15" height="15" rx="4" fill="#52dc3c"/><rect x="32" y="13" width="15" height="15" rx="4" fill="#fcb818"/><rect x="51" y="13" width="15" height="15" rx="4" fill="#f59010"/><rect x="13" y="33" width="15" height="15" rx="4" fill="#dc1c1c"/><rect x="32" y="33" width="15" height="15" rx="4" fill="#9aa4ac"/><rect x="51" y="33" width="15" height="15" rx="4" fill="#fc3458"/><rect x="13" y="53" width="15" height="15" rx="4" fill="#a23cd0"/><rect x="32" y="53" width="15" height="15" rx="4" fill="#1c96f4"/><rect x="51" y="53" width="15" height="15" rx="4" fill="#38c8a0"/></g></svg></button>
        <button aria-label="Safari" class="relative w-[108px] h-20 flex items-center justify-center"><svg class="w-20 h-20" viewBox="0 0 80 80"><rect width="80" height="80" rx="18" fill="url(#g-white)"/><circle cx="40" cy="40" r="34" fill="#1d84ee"/><circle cx="40" cy="40" r="29" fill="none" stroke="#fff" stroke-width="5" stroke-dasharray="1 2.036"/><path d="M64 19L36 36l8 8z" fill="#f0403a"/><path d="M17 60l19-24 8 8z" fill="#f4f4f4"/></svg></button>
        <button aria-label="Messages" class="relative w-[108px] h-20 flex items-center justify-center"><svg class="w-20 h-20" viewBox="0 0 80 80"><rect width="80" height="80" rx="18" fill="url(#g-green)"/><path d="M40 14c17 0 30 11 30 24S57 62 40 62q-5 0-9-1-3 5-10 6 4-4 3-9C15 54 10 46 10 38c0-13 13-24 30-24z" fill="url(#g-bubble)"/></svg><span class="absolute right-[2px] -top-[10px] w-[38px] h-[38px] rounded-full bg-[#fa423c] text-white text-[22px] leading-[38px]">2</span><span class="absolute left-1/2 -translate-x-1/2 -bottom-[26px] w-2 h-2 rounded-full bg-[#120060]"></span></button>
        <button aria-label="Mail" class="relative w-[108px] h-20 flex items-center justify-center"><svg class="w-20 h-20" viewBox="0 0 80 80"><rect width="80" height="80" rx="18" fill="url(#g-blue)"/><rect x="12" y="23" width="56" height="35" rx="4" fill="#f0f0f0"/><path d="M14 25l21 20q5 5 10 0l21-20M14 56l18-15M66 56L48 41" fill="none" stroke="#a4a4a4" stroke-width="2"/></svg><span class="absolute right-[2px] -top-[10px] w-[38px] h-[38px] rounded-full bg-[#fa423c] text-white text-[22px] leading-[38px]">2</span><span class="absolute left-1/2 -translate-x-1/2 -bottom-[26px] w-2 h-2 rounded-full bg-[#120060]"></span></button>
        <button aria-label="Maps" class="relative w-[108px] h-20 flex items-center justify-center"><svg class="w-20 h-20" viewBox="0 0 80 80"><g clip-path="url(#tile)"><path d="M0 0h80v80H0z" fill="#f2f2f4"/><path d="M0 0h18v26L0 14zM42 0h38v58L42 26z" fill="#4cd462"/><path d="M50 -2q2 26 32 30" fill="none" stroke="#fff" stroke-width="12"/><path d="M56 -2q2 20 26 23" fill="none" stroke="#c4c8cc" stroke-width="5"/><path d="M0 30l18 12v38H0z" fill="#f284c8"/><path d="M42 50l30 30H42z" fill="#fcc41c"/><path d="M21 0h18v48H21z" fill="#1a7cf4"/></g><circle cx="30" cy="50" r="18.500" fill="#2080fa" stroke="#fff" stroke-width="3"/><path d="M30 37l9 23-9-5-9 5z" fill="#fff"/></svg></button>
        <button aria-label="Photos" class="relative w-[108px] h-20 flex items-center justify-center"><svg class="w-20 h-20" viewBox="0 0 80 80"><rect width="80" height="80" rx="18" fill="#fbfbfb"/><g class="[&>rect]:mix-blend-multiply"><rect x="31" y="5" width="18" height="34" rx="9" fill="#f9a01c"/><rect x="31" y="5" width="18" height="34" rx="9" fill="#f0e400" transform="rotate(45 40 40)"/><rect x="31" y="5" width="18" height="34" rx="9" fill="#98cc38" transform="rotate(90 40 40)"/><rect x="31" y="5" width="18" height="34" rx="9" fill="#68c48c" transform="rotate(135 40 40)"/><rect x="31" y="5" width="18" height="34" rx="9" fill="#68b0e4" transform="rotate(180 40 40)"/><rect x="31" y="5" width="18" height="34" rx="9" fill="#9494d0" transform="rotate(225 40 40)"/><rect x="31" y="5" width="18" height="34" rx="9" fill="#cc84ac" transform="rotate(270 40 40)"/><rect x="31" y="5" width="18" height="34" rx="9" fill="#f8604c" transform="rotate(315 40 40)"/></g></svg></button>
        <button aria-label="FaceTime" class="relative w-[108px] h-20 flex items-center justify-center"><svg class="w-20 h-20" viewBox="0 0 80 80"><rect width="80" height="80" rx="18" fill="url(#g-green)"/><rect x="12" y="22" width="39" height="36" rx="9" fill="url(#g-bubble)"/><path d="M54 37l13-11q1 0 1 2v26q0 2-1 2L54 45z" fill="url(#g-bubble)"/></svg><span class="absolute right-[2px] -top-[10px] w-[38px] h-[38px] rounded-full bg-[#fa423c] text-white text-[22px] leading-[38px]">1</span></button>
        <button aria-label="Calendar" class="relative w-[108px] h-20 flex items-center justify-center"><svg class="w-20 h-20" viewBox="0 0 80 80"><rect width="80" height="80" rx="18" fill="#f8f8f8"/><path clip-path="url(#tile)" d="M0 0h80v25H0z" fill="#f4554c"/><text x="40" y="20" text-anchor="middle" font-size="16" font-weight="600" fill="#fff">MAR</text><text x="40" y="68" text-anchor="middle" font-size="47" font-weight="300" fill="#222">24</text></svg></button>
        <button aria-label="Contacts" class="relative w-[108px] h-20 flex items-center justify-center pl-1"><svg class="w-[84px] h-20" viewBox="0 0 84 80"><path d="M76 12h4q3 0 3 4v14h-7z" fill="#d0d0d0"/><path d="M76 30h7v14h-7z" fill="#58b8f0"/><path d="M76 44h7v14h-7z" fill="#f49020"/><path d="M76 58h7v8q0 4-3 4h-4z" fill="#58d060"/><rect width="79" height="80" rx="17" fill="#ac8048"/><circle cx="42" cy="40" r="25" fill="none" stroke="#8a6434" stroke-width="1.500"/><circle cx="42" cy="34" r="9" fill="#8a6434"/><path d="M25 58q17-18 34 0-17 14-34 0z" fill="#8a6434"/><path d="M5 6v68" stroke="#94693a"/></svg></button>
        <button aria-label="Reminders" class="relative w-[108px] h-20 flex items-center justify-center"><svg class="w-20 h-20" viewBox="0 0 80 80"><rect width="80" height="80" rx="18" fill="#fbfafa"/><circle cx="16" cy="20" r="7" fill="#147efc"/><circle cx="16" cy="40" r="7" fill="#f4443c"/><circle cx="16" cy="60" r="7" fill="#fa940c"/><g fill="none" stroke="#fff" stroke-width="1.500"><circle cx="16" cy="20" r="5"/><circle cx="16" cy="40" r="5"/><circle cx="16" cy="60" r="5"/></g><path d="M30 20h41M30 40h41M30 60h41" stroke="#bcbcbc" stroke-width="1.500"/></svg></button>
        <button aria-label="Notes" class="relative w-[108px] h-20 flex items-center justify-center"><svg class="w-20 h-20" viewBox="0 0 80 80"><rect width="80" height="80" rx="18" fill="#f2f1ee"/><path clip-path="url(#tile)" d="M0 0h80v20H0z" fill="#fdc91c"/><path d="M0 21h80" stroke="#a89a70"/><path d="M0 24h80" stroke="#b8b8b4" stroke-dasharray="1 2"/><path d="M0 40h80M0 60h80" stroke="#c8c8c4"/></svg><span class="absolute left-1/2 -translate-x-1/2 -bottom-[26px] w-2 h-2 rounded-full bg-[#1c0090]"></span></button>
        <button aria-label="News" class="relative w-[108px] h-20 flex items-center justify-center"><svg class="w-20 h-20" viewBox="0 0 80 80"><rect width="80" height="80" rx="18" fill="#fff"/><path d="M17 20q0-3 3-3h6l37 44q0 3-3 3h-7L17 28zM42 17h18q3 0 3 3v19zM17 42l20 22H20q-3 0-3-3z" fill="#fc3c5c"/></svg><span class="absolute left-1/2 -translate-x-1/2 -bottom-[26px] w-2 h-2 rounded-full bg-[#1c0090]"></span></button>
        <button aria-label="Keynote" class="relative w-[108px] h-20 flex items-center justify-center"><svg class="w-20 h-20" viewBox="0 0 80 80"><rect width="80" height="80" rx="18" fill="url(#g-blue2)"/><path d="M20 11h40q2 0 2 2l2 20q0 3-2 3H18q-2 0-2-3l2-20q0-2 2-2z" fill="#f4f6f8"/><path d="M22 31h36" stroke="#9aa4b0" stroke-width="2"/><circle cx="40" cy="21" r="7.500" fill="#4fbf4f"/><path d="M40 21v-7.500a7.500 7.500 0 0 1 7 9z" fill="#38b4f0"/><path d="M40 21v-7.500a7.500 7.500 0 0 0-7 9z" fill="#c0409a"/><path d="M40 21l-7.500 1.500q1 4 4 5.500z" fill="#f4a030"/><path d="M38 36h4v30h-4z" fill="#dfe5ec"/><rect x="27" y="65" width="26" height="4" rx="1.500" fill="#dfe5ec"/></svg></button>
        <button aria-label="Pages" class="relative w-[108px] h-20 flex items-center justify-center"><svg class="w-20 h-20" viewBox="0 0 80 80"><rect width="80" height="80" rx="18" fill="url(#g-orange)"/><path d="M24 67.500h44" stroke="#ffd08a" stroke-width="3"/><path d="M65 15q3 3-1 9L27 61l-11 6-3 0 1-3 4-9L55 18q7-6 10-3z" fill="#f6f6f8"/><path d="M37 37l6 7" stroke="#b0a8a0" stroke-width="2"/><path d="M13 68l2-5 3 3z" fill="#776666"/></svg></button>
        <button aria-label="App Store" class="relative w-[108px] h-20 flex items-center justify-center"><svg class="w-20 h-20" viewBox="0 0 80 80"><rect width="80" height="80" rx="18" fill="url(#g-blue2)"/><path d="M44 17L28 50M20 58l-1 3M36 17l5 9M44 32l16 30M15 49h27M54 49h11" fill="none" stroke="#f6faff" stroke-width="7" stroke-linecap="round"/></svg></button>
        <button aria-label="System Preferences" class="relative w-[108px] h-20 flex items-center justify-center"><svg class="w-20 h-20" viewBox="0 0 80 80"><rect width="80" height="80" rx="18" fill="url(#g-grey)"/><circle cx="40" cy="40" r="35" fill="#1c1c1e"/><circle cx="40" cy="40" r="31" fill="none" stroke="#a8a8aa" stroke-width="3" stroke-dasharray="1.500 1.500"/><circle cx="40" cy="40" r="27" fill="#3a3a3c" stroke="#b4b4b6" stroke-width="4"/><circle cx="40" cy="40" r="20" fill="none" stroke="#77777a" stroke-width="3" stroke-dasharray="1.500 1.500"/><circle cx="40" cy="40" r="16" fill="#4c4c4e" stroke="#88888a" stroke-width="4"/><path d="M40 40h26M40 40L27 17M40 40L27 63" stroke="#b8b8ba" stroke-width="4"/><circle cx="40" cy="40" r="3" fill="#444"/></svg></button>
        <span class="w-12 flex justify-center"><span class="w-[2px] h-[94px] bg-[#7a1cc0]"></span></span>
        <button aria-label="Chrome" class="relative w-[108px] h-20 flex items-center justify-center"><svg class="w-20 h-20" viewBox="0 0 80 80"><rect width="80" height="80" rx="18" fill="#fafafa"/><circle cx="40" cy="40" r="33" fill="#fccc40"/><path d="M40 25h28.500A33 33 0 0 0 12.600 21.600L27 47z" fill="#dc4a3c"/><path d="M12.600 21.600A33 33 0 0 0 39 73l14-26-13 8-13-8z" fill="#18a05c"/><circle cx="40" cy="40" r="15" fill="#fff"/><circle cx="40" cy="40" r="12" fill="#4886f4"/></svg><span class="absolute left-1/2 -translate-x-1/2 -bottom-[26px] w-2 h-2 rounded-full bg-[#3c0090]"></span></button>
        <button aria-label="Illustrator" class="relative w-[108px] h-20 flex items-center justify-center"><svg class="w-[82px] h-20" viewBox="0 0 82 80"><rect width="82" height="80" rx="16" fill="#330000"/><text x="41" y="56" text-anchor="middle" font-family="Open Sans" font-size="48" font-weight="700" fill="#ff9a00">Ai</text></svg><span class="absolute left-1/2 -translate-x-1/2 -bottom-[26px] w-2 h-2 rounded-full bg-[#3c0090]"></span></button>
        <button aria-label="Spotify" class="relative w-[108px] h-20 flex items-center justify-center"><svg class="w-[82px] h-[82px]" viewBox="0 0 82 82"><circle cx="41" cy="41" r="41" fill="#1ed760"/><path d="M17 28q25-7 51 7M19 41q23-6 43 6M20 54q20-5 38 5" fill="none" stroke="#0c1c10" stroke-width="7" stroke-linecap="round"/></svg><span class="absolute left-1/2 -translate-x-1/2 -bottom-[26px] w-2 h-2 rounded-full bg-[#3c0090]"></span></button>
        <button aria-label="Photoshop" class="relative w-[108px] h-20 flex items-center justify-center"><svg class="w-[82px] h-20" viewBox="0 0 82 80"><rect width="82" height="80" rx="16" fill="#001e36"/><text x="42" y="56" text-anchor="middle" font-family="Open Sans" font-size="46" font-weight="700" fill="#31a8ff">Ps</text></svg><span class="absolute left-1/2 -translate-x-1/2 -bottom-[26px] w-2 h-2 rounded-full bg-[#3c0090]"></span></button>
        <button aria-label="Zoom" class="relative w-[108px] h-20 flex items-center justify-center"><svg class="w-[88px] h-[88px]" viewBox="0 0 88 88"><rect width="88" height="88" rx="26" fill="url(#g-zoom)"/><path d="M17 31q0-2 2-2h27q9 0 9 9v19q0 2-2 2H26q-9 0-9-9zM58 39l11-9q2-1 2 1v26q0 2-2 1l-11-9z" fill="#fff"/></svg><span class="absolute left-1/2 -translate-x-1/2 -bottom-[26px] w-2 h-2 rounded-full bg-[#3c0090]"></span></button>
        <span class="w-12 flex justify-center"><span class="w-[2px] h-[94px] bg-[#6a1cc0]"></span></span>
        <button aria-label="Documents" class="relative w-[108px] h-20 flex items-center justify-center"><svg class="w-16 h-[92px]" viewBox="0 0 64 92"><path d="M9 0h46v10H9z" fill="#3a3440"/><path d="M14 1h12v6H14z" fill="#c88c9c"/><path d="M5 5h55v40H5z" fill="#f4f0f4"/><path d="M42 12h15v22H42z" fill="#e0c8dc"/><path d="M0 9h34q6 4 8 18 18 0 22 14v51H0z" fill="#fdfdfd"/><path d="M34 9q8 4 10 19 12-2 17 6Q50 14 34 9z" fill="#dcdcdc"/><path d="M16 39h32l4 34v6H12v-6z" fill="#a8b4b6"/><circle cx="32" cy="58" r="13" fill="#b8c2c4" stroke="#8c989a"/><circle cx="32" cy="58" r="4" fill="#ccd4d6" stroke="#8c989a"/><path d="M20 41h19v6H20zM12 73h40v6H12z" fill="#333a3c"/></svg></button>
        <button aria-label="Trash" class="relative w-[108px] h-20 flex items-center justify-center"><svg class="w-[72px] h-[94px]" viewBox="0 0 72 94"><ellipse cx="36" cy="13" rx="35" ry="9" fill="#cfc8d8"/><path d="M6 14l7-6 12-7 10 3 6 6 5-9 9 7 9 2 6 6-10 5H14z" fill="#ececec"/><path d="M12 12l9 2-4 6-6-3zM21 5l12 5-10 2zM40 10l5-7 3 11-8 4zM56 10l8 3-9 5zM16 17h14l-3 5H18zM42 15l14 2-6 5-9-1z" fill="#4c4846"/><path d="M24 11l8 1-3 5z" fill="#30b8c8"/><path d="M47 13l6 4-6 1z" fill="#c0602c"/><path d="M58 12l5 4-5 1z" fill="#88a050"/><path d="M1 11q4 8 16 9 20 4 40-1 10-2 14-8l-8 73q-1 8-12 8H22q-11 0-12-8z" fill="url(#g-bin)"/><path d="M28 40q20-2 24-14-12 8-24 14z" fill="#fafafa"/><path d="M36 23l-4 18" stroke="#d8d4dc" stroke-width="2"/></svg></button>
    </nav>

    <script>
        // Toolbar tools, top to bottom. Icons are drawn on a 40x40 grid.
        const tools = [
            ['Move', '<use href="#move" x="5" y="6" width="30" height="30"/>'],
            ['Rectangular Marquee', '<path d="M6 12V8h6M17 8h7M29 8h6v4M35 17v6M35 28v4h-6M24 32h-7M12 32H6v-4M6 23v-6" fill="none" stroke="#ddd" stroke-width="2"/>'],
            ['Lasso', '<ellipse cx="21" cy="18" rx="15" ry="10.500" fill="none" stroke="#ddd" stroke-width="2" transform="rotate(-8 21 18)"/><path d="M6 23c-2 4 2 7 6 6s4-5 0-5-4 3-1 5 4 4 1 8" fill="none" stroke="#ddd" stroke-width="2"/>'],
            ['Object Selection', '<path d="M8 5h24v25H8z" fill="none" stroke="#ddd" stroke-width="2" stroke-dasharray="2 2"/><path d="M13 10h14v10l-4-2v6H13z" fill="#ddd"/><path d="M24 19l13 12h-7l-6 6z" fill="#ddd"/>'],
            ['Crop', '<path d="M1 11h6M32 28h6" stroke="#ddd" stroke-width="2.500"/><path d="M10 4v24h16M14 11h14v25" fill="none" stroke="#ddd" stroke-width="3"/>'],
            ['Frame', '<path d="M7 8h28v24H7zM7 8l28 24M35 8L7 32" fill="#6a6a6a" stroke="#ddd" stroke-width="2"/><path d="M4 6h4v4H4zM34 6h4v4h-4zM4 30h4v4H4zM34 30h4v4h-4z" fill="#ddd"/>', true],
            ['Eyedropper', '<path d="M22 15L7 29q-2 3 0 5t6 0l14-14" fill="none" stroke="#ddd" stroke-width="2.500"/><path d="M28 8q4-5 7-2t-1 7l-4 4 2 3-3 3L17 12l3-3 3 2z" fill="#ddd"/>'],
            ['Healing Brush', '<circle cx="13" cy="14" r="9" fill="none" stroke="#ddd" stroke-width="2" stroke-dasharray="2 2.500"/><g transform="rotate(-42 22 20)"><rect x="4" y="13" width="36" height="14" rx="4" fill="#ddd" stroke="#535353" stroke-width="1"/><path d="M14 13v14M30 13v14" stroke="#535353" stroke-width="1.500"/><path d="M17 16h3v3h-3zM24 16h3v3h-3zM17 22h3v3h-3zM24 22h3v3h-3z" fill="#535353"/></g>'],
            ['Brush', '<use href="#brush" x="6" y="5" width="30" height="30"/>'],
            ['Clone Stamp', '<path d="M20 5a6 6 0 0 1 6 6c0 4-3 5-3 11h8q3 0 3 4v4H7v-4q0-4 3-4h7c0-6-3-7-3-11a6 6 0 0 1 6-6zM8 32h24v2H8z" fill="#ddd"/>'],
            ['History Brush', '<use href="#brush" x="7" y="6" width="29" height="29"/><path d="M7 14q6-7 16-3" fill="none" stroke="#ddd" stroke-width="2"/><path d="M1 17l6-7 5 7z" fill="#ddd"/><path d="M33 19q0 10-10 13" fill="none" stroke="#ddd" stroke-width="2" stroke-dasharray="2 2.500"/>'],
            ['Eraser', '<path d="M24 7l10 8-14 13-10-8z" fill="#ddd"/><path d="M12 20l-6 6 6 6h5l5-5M12 33h23" fill="none" stroke="#ddd" stroke-width="2"/>'],
            ['Gradient', '<defs><linearGradient id="g-tool"><stop stop-color="#222"/><stop offset="1" stop-color="#ddd"/></linearGradient></defs><path d="M6 8h29v24H6z" fill="url(#g-tool)" stroke="#ddd" stroke-width="2"/>'],
            ['Blur', '<path d="M19 4c1 7 12 11 12 20 0 6-4 11-11 11S9 30 9 24C9 15 18 11 19 4z" fill="#ddd"/>'],
            ['Dodge', '<circle cx="25" cy="15" r="10" fill="#ddd"/><path d="M17 22L7 33" stroke="#ddd" stroke-width="4" stroke-linecap="round"/>'],
            ['Pen', '<path d="M24 8l9 10-6 11-19 5 4-17z" fill="none" stroke="#ddd" stroke-width="2"/><path d="M8 34l10-11" stroke="#ddd" stroke-width="2"/><circle cx="19" cy="22" r="3" fill="#ddd"/><path d="M25 6q2-1 4 1l5 5q2 2 0 4l-2 2-9-9z" fill="#ddd"/>'],
            ['Type', '<path d="M8 6h26v8h-3l-1-4h-7v21l5 1v3H14v-3l5-1V10h-7l-1 4H8z" fill="#ddd"/>'],
            ['Path Selection', '<path d="M12 6v24l6-6 5 11 3-1-5-11h10z" fill="#ddd" stroke="#ddd" stroke-width="2"/><path d="M13 8v18l5-5h9z" fill="#000"/>'],
            ['Rectangle', '<path d="M6 8h29v23H6z" fill="#6e6e6e" stroke="#ddd" stroke-width="2"/>'],
            ['Hand', '<path d="M14 22V9M19.500 20V6.500M25 20V8M30.500 22V13M14 26L7 19" stroke="#ddd" stroke-width="3.500" stroke-linecap="round"/><path d="M12 18h20v8q-1 9-10 9-7 0-11-8l-4-7z" fill="#ddd"/>'],
            ['Zoom', '<circle cx="16" cy="16" r="11" fill="none" stroke="#ddd" stroke-width="2"/><path d="M14 10q6 0 8 5" fill="none" stroke="#ddd" stroke-width="2"/><path d="M24 24l11 10" stroke="#ddd" stroke-width="4"/>', true],
            ['Edit Toolbar', '<circle cx="8.500" cy="20" r="3.500" fill="#ddd"/><circle cx="20" cy="20" r="3.500" fill="#ddd"/><circle cx="31.500" cy="20" r="3.500" fill="#ddd"/>']
        ];

        const toolsDiv = document.getElementById('tools');
        tools.forEach(([name, icon, single]) => {
            const btn = document.createElement('button');
            const active = name === 'Path Selection';
            btn.className = active
                ? 'relative w-[66px] h-[52px] grid place-items-center rounded-md border-2 border-[#5f5f5f] bg-[#383838]'
                : 'relative w-[66px] h-[52px] grid place-items-center';
            btn.setAttribute('aria-label', name + ' Tool');
            btn.innerHTML = `<svg class="w-10 h-10" viewBox="0 0 40 40">${icon}</svg>`;
            if (!single) {
                btn.innerHTML += '<svg class="absolute right-2 bottom-2 w-[6px] h-[6px]" viewBox="0 0 6 6"><path d="M6 0v6H0z" fill="#bbb"/></svg>';
            }
            toolsDiv.appendChild(btn);
        });
    </script>
</body>
</html>
